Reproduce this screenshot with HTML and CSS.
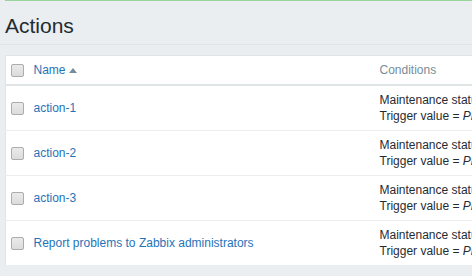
FILE: index.html
```html
<!DOCTYPE html>
<html>
<head>
<meta charset="utf-8">
<link rel="stylesheet" href="styles.css">
</head>
<body>
<div class="page">
  <header class="page-header">
    <h1 class="title">Actions</h1>
  </header>
  <table class="list">
    <colgroup>
      <col class="c-check">
      <col class="c-name">
      <col class="c-cond">
    </colgroup>
    <thead>
      <tr>
        <th class="cell-check"><span class="checkbox"></span></th>
        <th><a class="sort-link">Name</a><span class="arrow-up"></span></th>
        <th class="th-plain">Conditions</th>
      </tr>
    </thead>
    <tbody>
      <tr>
        <td class="cell-check"><span class="checkbox"></span></td>
        <td><a class="link">action-1</a></td>
        <td class="cond">Maintenance status not in <i>maintenance</i><br>Trigger value = <i>PROBLEM</i></td>
      </tr>
      <tr>
        <td class="cell-check"><span class="checkbox"></span></td>
        <td><a class="link">action-2</a></td>
        <td class="cond">Maintenance status not in <i>maintenance</i><br>Trigger value = <i>PROBLEM</i></td>
      </tr>
      <tr>
        <td class="cell-check"><span class="checkbox"></span></td>
        <td><a class="link">action-3</a></td>
        <td class="cond">Maintenance status not in <i>maintenance</i><br>Trigger value = <i>PROBLEM</i></td>
      </tr>
      <tr>
        <td class="cell-check"><span class="checkbox"></span></td>
        <td><a class="link">Report problems to Zabbix administrators</a></td>
        <td class="cond">Maintenance status not in <i>maintenance</i><br>Trigger value = <i>PROBLEM</i></td>
      </tr>
    </tbody>
  </table>
</div>
</body>
</html>
```
FILE: styles.css
```css
html, body {
  margin: 0;
  padding: 0;
}
body {
  background: #ebeef0;
  font-family: "Liberation Sans", Arial, sans-serif;
  font-size: 12px;
  color: #1f2c33;
  overflow: hidden;
  width: 472px;
  height: 276px;
}
.page {
  width: 900px;
  border-top: 1px solid #98d49a;
  margin-left: 5px;
}
.page-header {
  padding: 13px 0 6px 0;
  border-bottom: 1px solid #dfe4e7;
  margin-left: -5px;
  padding-left: 5px;
}
.title {
  margin: 0;
  font-size: 21px;
  line-height: 24px;
  font-weight: normal;
  color: #1f2c33;
}
.list {
  margin-top: 10px;
  width: 900px;
  table-layout: fixed;
  border-collapse: collapse;
  background: #fff;
  border: 1px solid #dfe4e7;
}
.c-check { width: 23px; }
.c-name { width: 346px; }
.c-cond { width: 531px; }
th, td {
  text-align: left;
  vertical-align: middle;
  padding: 0 5px;
  white-space: nowrap;
}
th {
  height: 28px;
  font-weight: normal;
  color: #768d99;
  border-bottom: 2px solid #dfe4e7;
  line-height: 14px;
}
td {
  height: 44px;
  padding-top: 0;
  padding-bottom: 0;
  border-bottom: 1px solid #ebeef0;
  line-height: 16px;
}
.cell-check {
  padding-right: 6px;
  line-height: 0;
}
.checkbox {
  display: inline-block;
  width: 11px;
  height: 11px;
  border: 1px solid #acacac;
  border-radius: 2px;
  background: linear-gradient(#eaeaea, #dcdcdc);
  vertical-align: middle;
}
.sort-link, .link {
  color: #1f74b8;
  text-decoration: none;
}
.arrow-up {
  display: inline-block;
  width: 0;
  height: 0;
  margin-left: 3px;
  border-left: 4px solid transparent;
  border-right: 4px solid transparent;
  border-bottom: 5px solid #768d99;
  vertical-align: 1px;
}
.th-plain {
  color: #768d99;
}
.cond i {
  font-style: italic;
}
```
